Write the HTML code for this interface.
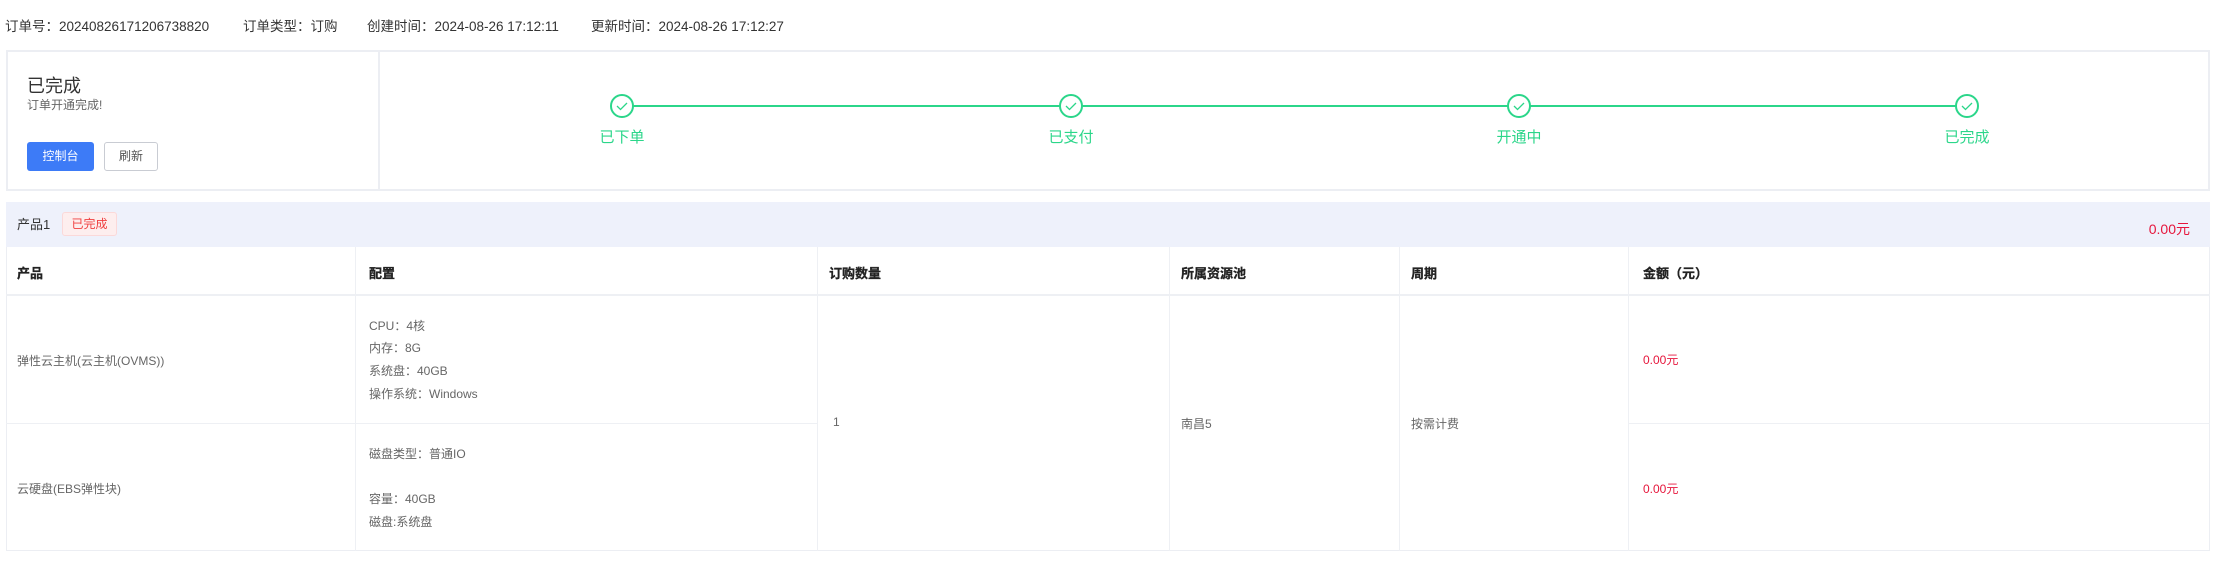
<!DOCTYPE html>
<html><head><meta charset="utf-8"><style>
*{margin:0;padding:0;box-sizing:border-box}
body{width:2230px;height:568px;background:#fff;font-family:"Liberation Sans","Noto Sans CJK SC",sans-serif;color:#333;position:relative;overflow:hidden}
.a{position:absolute;white-space:nowrap}
.top{font-size:13.5px;color:#333;top:15px}
.card{position:absolute;left:6px;top:50px;width:2204px;height:141px;border:2px solid #eceef3}
.vd{position:absolute;left:370px;top:0;width:2px;height:100%;background:#eceef3}
.btn{position:absolute;top:90px;height:29px;border-radius:3px;font-size:12px;text-align:center;line-height:29px}
.lab{position:absolute;top:74px;font-size:15px;color:#2bd68a;width:100px;text-align:center}
.band{position:absolute;left:6px;top:202px;width:2204px;height:45px;background:#eef1fb}
.tbl{position:absolute;left:6px;top:247px;width:2204px;height:304px;border:1px solid #eceef3;border-top:none}
.h{position:absolute;top:263px;font-size:13px;font-weight:bold;color:#222;-webkit-text-stroke:0.3px #222}
.c{font-size:12px;color:#666}
.vl{position:absolute;width:1px;background:#eef0f4}
.hl{position:absolute;height:1px;background:#eef0f4}
.red{color:#e6163c}
</style></head><body>
<div class="a top" style="left:5px">订单号：20240826171206738820</div>
<div class="a top" style="left:243px">订单类型：订购</div>
<div class="a top" style="left:367px">创建时间：2024-08-26 17:12:11</div>
<div class="a top" style="left:591px">更新时间：2024-08-26 17:12:27</div>

<div class="card">
 <div class="vd"></div>
 <div class="a" style="left:19px;top:20px;font-size:18px;color:#333">已完成</div>
 <div class="a" style="left:19px;top:44px;font-size:12px;color:#666">订单开通完成!</div>
 <div class="btn" style="left:19px;width:67px;background:#3d7bf7;color:#fff">控制台</div>
 <div class="btn" style="left:96px;width:54px;border:1px solid #c9ccd3;color:#555;line-height:27px">刷新</div>
 <div style="position:absolute;left:614px;top:53px;width:1345px;height:2px;background:#2bd68a"></div>
 <svg style="position:absolute;left:0;top:0" width="2204" height="141">
  <g fill="#fff" stroke="#2bd68a" stroke-width="2">
   <circle cx="614" cy="54" r="11"/><circle cx="1063" cy="54" r="11"/><circle cx="1511" cy="54" r="11"/><circle cx="1959" cy="54" r="11"/>
  </g>
  <g fill="none" stroke="#2bd68a" stroke-width="1.3">
   <path d="M609 54l3.5 3.5 6.5-6.5"/><path d="M1058 54l3.5 3.5 6.5-6.5"/><path d="M1506 54l3.5 3.5 6.5-6.5"/><path d="M1954 54l3.5 3.5 6.5-6.5"/>
  </g>
 </svg>
 <div class="lab" style="left:564px">已下单</div>
 <div class="lab" style="left:1013px">已支付</div>
 <div class="lab" style="left:1461px">开通中</div>
 <div class="lab" style="left:1909px">已完成</div>
</div>

<div class="band"></div>
<div class="a" style="left:17px;top:214px;font-size:13px;color:#333">产品1</div>
<div class="a" style="left:62px;top:212px;width:55px;height:24px;background:#fdeeee;border:1px solid #fbd9d9;border-radius:3px;font-size:12px;color:#f04040;text-align:center;line-height:22px">已完成</div>
<div class="a red" style="right:40px;top:219px;font-size:14px">0.00元</div>

<div class="tbl"></div>
<div class="hl" style="left:6px;top:294px;width:2204px;height:2px"></div>
<div class="hl" style="left:6px;top:423px;width:811px"></div>
<div class="hl" style="left:1628px;top:423px;width:582px"></div>
<div class="vl" style="left:355px;top:247px;height:304px"></div>
<div class="vl" style="left:817px;top:247px;height:304px"></div>
<div class="vl" style="left:1169px;top:247px;height:304px"></div>
<div class="vl" style="left:1399px;top:247px;height:304px"></div>
<div class="vl" style="left:1628px;top:247px;height:304px"></div>

<div class="h" style="left:17px">产品</div>
<div class="h" style="left:369px">配置</div>
<div class="h" style="left:829px">订购数量</div>
<div class="h" style="left:1181px">所属资源池</div>
<div class="h" style="left:1411px">周期</div>
<div class="h" style="left:1643px">金额（元）</div>

<div class="a c" style="left:17px;top:352px">弹性云主机(云主机(OVMS))</div>
<div class="a c" style="left:17px;top:480px">云硬盘(EBS弹性块)</div>
<div class="a c" style="left:369px;top:317px">CPU：4核</div>
<div class="a c" style="left:369px;top:339px">内存：8G</div>
<div class="a c" style="left:369px;top:362px">系统盘：40GB</div>
<div class="a c" style="left:369px;top:385px">操作系统：Windows</div>
<div class="a c" style="left:369px;top:445px">磁盘类型：普通IO</div>
<div class="a c" style="left:369px;top:490px">容量：40GB</div>
<div class="a c" style="left:369px;top:513px">磁盘:系统盘</div>
<div class="a c" style="left:833px;top:415px">1</div>
<div class="a c" style="left:1181px;top:415px">南昌5</div>
<div class="a c" style="left:1411px;top:415px">按需计费</div>
<div class="a c red" style="left:1643px;top:351px">0.00元</div>
<div class="a c red" style="left:1643px;top:480px">0.00元</div>
</body></html>
